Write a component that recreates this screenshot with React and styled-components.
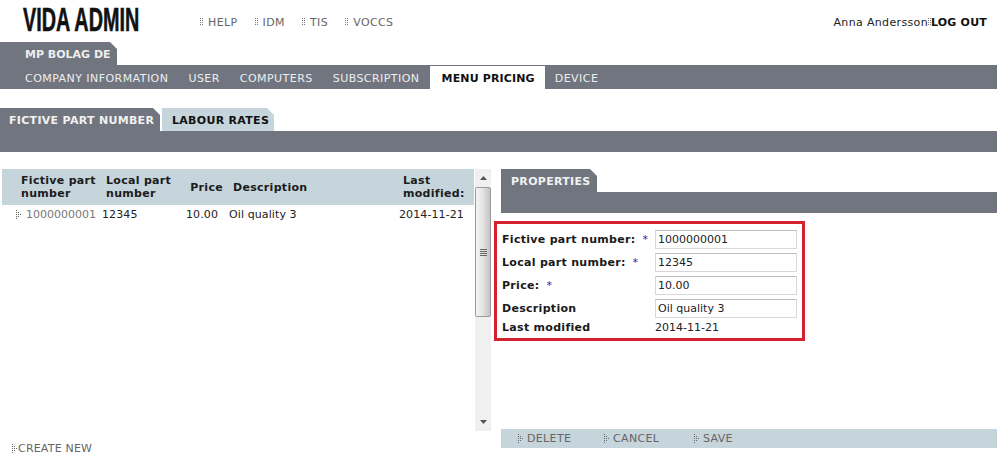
import React from 'react'
import styled, { createGlobalStyle } from 'styled-components'

const GlobalStyle = createGlobalStyle`
  html, body { margin: 0; padding: 0; background: #fff; }
  body { font-family: "DejaVu Sans", Verdana, sans-serif; font-size: 11px; color: #222; }
  * { box-sizing: border-box; }
`

const tabShape = 'polygon(0 0, calc(100% - 7px) 0, 100% 7px, 100% 100%, 0 100%)'

const Page = styled.div`
  width: 997px;
  height: 462px;
  overflow: hidden;
  position: relative;
`

const Header = styled.header`
  display: flex;
  align-items: center;
  height: 42px;
  padding: 2px 10px 0 23px;
`

const Logo = styled.div`
  width: 177px;
  margin-bottom: 5px;
  font: 700 33px/1 "Liberation Sans", Arial, sans-serif;
  color: #111;
  white-space: nowrap;
  -webkit-text-stroke: 0.6px #111;
  transform: scaleX(0.6);
  transform-origin: left center;
`

const TopNav = styled.nav`
  display: flex;
  gap: 17px;
  flex: 1;
`

const TopLink = styled.span`
  display: flex;
  align-items: center;
  gap: 5px;
  color: #666;
  letter-spacing: 0.4px;
`

const User = styled.div`
  display: flex;
  align-items: center;
  color: #222;
  letter-spacing: 0.35px;
`

const LogOut = styled.b`
  color: #111;
  letter-spacing: 0.2px;
`

const CompanyTab = styled.div`
  width: 117px;
  height: 23px;
  padding: 6px 0 0 25px;
  background: #71757f;
  clip-path: ${tabShape};
  color: #eee;
  font-weight: 700;
`

const MenuBar = styled.div`
  display: flex;
  height: 24px;
  padding: 1px 0 0 15px;
  background: #71757f;
`

const MenuItem = styled.div`
  padding: 6px 10px 0 ${p => (p.$active ? '12px' : '10px')};
  color: ${p => (p.$active ? '#111' : '#eceef0')};
  background: ${p => (p.$active ? '#fff' : 'transparent')};
  font-weight: ${p => (p.$active ? 700 : 400)};
  letter-spacing: ${p => (p.$active ? '0.15px' : '0.45px')};
  white-space: nowrap;
`

const SubTabs = styled.div`
  display: flex;
  gap: 2px;
  margin-top: 19px;
`

const SubTab = styled.div`
  height: 23px;
  width: ${p => p.$width}px;
  padding: 6px 0 0 ${p => p.$pad}px;
  background: ${p => (p.$active ? '#71757f' : '#c6d4db')};
  color: ${p => (p.$active ? '#f1f1f1' : '#111')};
  clip-path: ${tabShape};
  font-weight: 700;
  letter-spacing: 0.3px;
  white-space: nowrap;
`

const GreyBar = styled.div`
  height: 21px;
  background: #71757f;
`

const Content = styled.div`
  display: flex;
  margin-top: 17px;
`

const LeftColumn = styled.section`
  width: 501px;
  padding-left: 2px;
`

const ListArea = styled.div`
  display: flex;
  height: 262px;
`

const Table = styled.div`
  width: 472px;
`

const columns = '100px 78px 49px 170px 75px'

const HeadRow = styled.div`
  display: grid;
  grid-template-columns: ${columns};
  align-items: center;
  height: 36px;
  background: #c6d4db;
  color: #1c1c1c;
  font-weight: 700;
  line-height: 13px;
  letter-spacing: 0.3px;
`

const HeadCell = styled.div`
  padding-left: ${p => p.$pad ?? 4}px;
  ${p => p.$right && 'text-align: right; padding: 0 6px 0 0;'}
`

const BodyRow = styled.div`
  display: grid;
  grid-template-columns: ${columns};
  align-items: center;
  height: 18px;
  color: #222;
  letter-spacing: 0.1px;
`

const BodyCell = styled.div`
  ${p => p.$right && 'text-align: right; padding-right: 11px;'}
  white-space: nowrap;
`

const IdCell = styled.div`
  display: flex;
  align-items: center;
  gap: 4px;
  padding-left: 14px;
  color: #777;
  letter-spacing: 0;
`

const Scrollbar = styled.div`
  display: flex;
  flex-direction: column;
  width: 16px;
  margin-left: 1px;
  background: #f0f0f0;
`

const ScrollButton = styled.div`
  display: flex;
  align-items: center;
  justify-content: center;
  height: 18px;
  flex: none;
`

const ScrollThumb = styled.div`
  display: flex;
  align-items: center;
  justify-content: center;
  height: 130px;
  flex: none;
  border: 1px solid #9a9a9a;
  border-radius: 2px;
  background: linear-gradient(90deg, #f4f4f4 0%, #e6e6e6 45%, #c4c4c4 100%);
`

const ScrollTrack = styled.div`
  flex: 1;
`

const CreateNew = styled.div`
  display: flex;
  align-items: center;
  height: 16px;
  margin-top: 9px;
  padding-left: 10px;
  color: #666;
  letter-spacing: 0.2px;
`

const RightColumn = styled.section`
  flex: 1;
`

const FormBox = styled.div`
  width: 311px;
  height: 120px;
  margin: 8px 0 0 -7px;
  padding: 4px 5px 0;
  border: 3px solid #d4202f;
`

const FormRow = styled.div`
  display: grid;
  grid-template-columns: 153px 142px;
  align-items: center;
  height: 23px;
`

const FormLabel = styled.label`
  display: flex;
  gap: 7px;
  font-weight: 700;
  color: #1a1a1a;
  letter-spacing: 0.3px;
`

const Required = styled.span`
  color: #2a2ab8;
  font-weight: 400;
`

const TextInput = styled.input`
  width: 142px;
  height: 19px;
  padding: 0 2px;
  border: 1px solid #d8d8d8;
  border-top-color: #bdbdbd;
  font: 11px "DejaVu Sans", Verdana, sans-serif;
  color: #222;
  outline: none;
`

const StaticRow = styled(FormRow)`
  height: 14px;
`

const ActionBar = styled.div`
  display: flex;
  align-items: center;
  height: 19px;
  margin-top: 88px;
  padding-left: 17px;
  background: #c6d4db;
`

const Action = styled.span`
  display: flex;
  align-items: center;
  gap: 3px;
  width: ${p => p.$width}px;
  color: #666;
  letter-spacing: 0.35px;
`

// the little dotted separators used in front of links
const DotBullet = () => (
  <svg width="3" height="8" viewBox="0 0 3 8" fill="#777">
    {[0, 2, 4, 6].map(y => (
      <g key={y}>
        <rect x="0" y={y} width="1" height="1" />
        <rect x="2" y={y} width="1" height="1" />
      </g>
    ))}
  </svg>
)

const DotArrow = () => (
  <svg width="6" height="9" viewBox="0 0 6 9" fill="#666">
    <rect x="0" y="0" width="1" height="1" />
    <rect x="0" y="2" width="1" height="1" />
    <rect x="2" y="2" width="1" height="1" />
    <rect x="0" y="4" width="1" height="1" />
    <rect x="2" y="4" width="1" height="1" />
    <rect x="4" y="4" width="1" height="1" />
    <rect x="0" y="6" width="1" height="1" />
    <rect x="2" y="6" width="1" height="1" />
    <rect x="0" y="8" width="1" height="1" />
  </svg>
)

const ScrollArrow = ({ down }) => (
  <svg width="7" height="4" viewBox="0 0 7 4" fill="#555">
    <path d={down ? 'M0 0h7L3.5 4z' : 'M3.5 0L7 4H0z'} />
  </svg>
)

const Grip = () => (
  <svg width="7" height="7" viewBox="0 0 7 7" fill="#666">
    <rect y="0" width="7" height="1" />
    <rect y="2" width="7" height="1" />
    <rect y="4" width="7" height="1" />
    <rect y="6" width="7" height="1" />
  </svg>
)

const menu = ['COMPANY INFORMATION', 'USER', 'COMPUTERS', 'SUBSCRIPTION', 'MENU PRICING', 'DEVICE']

export default function App() {
  return (
    <Page>
      <GlobalStyle />
      <Header>
        <Logo>VIDA ADMIN</Logo>
        <TopNav>
          {['HELP', 'IDM', 'TIS', 'VOCCS'].map(item => (
            <TopLink key={item}><DotBullet />{item}</TopLink>
          ))}
        </TopNav>
        <User>Anna Andersson<DotBullet /><LogOut>LOG OUT</LogOut></User>
      </Header>

      <CompanyTab>MP BOLAG DE</CompanyTab>
      <MenuBar>
        {menu.map(item => (
          <MenuItem key={item} $active={item === 'MENU PRICING'}>{item}</MenuItem>
        ))}
      </MenuBar>

      <SubTabs>
        <SubTab $active $width={160} $pad={9}>FICTIVE PART NUMBER</SubTab>
        <SubTab $width={112} $pad={10}>LABOUR RATES</SubTab>
      </SubTabs>
      <GreyBar />

      <Content>
        <LeftColumn>
          <ListArea>
            <Table>
              <HeadRow>
                <HeadCell $pad={19}>Fictive part number</HeadCell>
                <HeadCell>Local part number</HeadCell>
                <HeadCell $right>Price</HeadCell>
                <HeadCell>Description</HeadCell>
                <HeadCell>Last modified:</HeadCell>
              </HeadRow>
              <BodyRow>
                <IdCell><DotArrow />1000000001</IdCell>
                <BodyCell>12345</BodyCell>
                <BodyCell $right>10.00</BodyCell>
                <BodyCell>Oil quality 3</BodyCell>
                <BodyCell>2014-11-21</BodyCell>
              </BodyRow>
            </Table>
            <Scrollbar>
              <ScrollButton><ScrollArrow /></ScrollButton>
              <ScrollThumb><Grip /></ScrollThumb>
              <ScrollTrack />
              <ScrollButton><ScrollArrow down /></ScrollButton>
            </Scrollbar>
          </ListArea>
          <CreateNew><DotArrow />CREATE NEW</CreateNew>
        </LeftColumn>

        <RightColumn>
          <SubTab $active $width={96} $pad={10}>PROPERTIES</SubTab>
          <GreyBar />
          <FormBox>
            <FormRow>
              <FormLabel>Fictive part number: <Required>*</Required></FormLabel>
              <TextInput defaultValue="1000000001" />
            </FormRow>
            <FormRow>
              <FormLabel>Local part number: <Required>*</Required></FormLabel>
              <TextInput defaultValue="12345" />
            </FormRow>
            <FormRow>
              <FormLabel>Price: <Required>*</Required></FormLabel>
              <TextInput defaultValue="10.00" />
            </FormRow>
            <FormRow>
              <FormLabel>Description</FormLabel>
              <TextInput defaultValue="Oil quality 3" />
            </FormRow>
            <StaticRow>
              <FormLabel>Last modified</FormLabel>
              <span>2014-11-21</span>
            </StaticRow>
          </FormBox>
          <ActionBar>
            <Action $width={86}><DotArrow />DELETE</Action>
            <Action $width={90}><DotArrow />CANCEL</Action>
            <Action $width={60}><DotArrow />SAVE</Action>
          </ActionBar>
        </RightColumn>
      </Content>
    </Page>
  )
}
